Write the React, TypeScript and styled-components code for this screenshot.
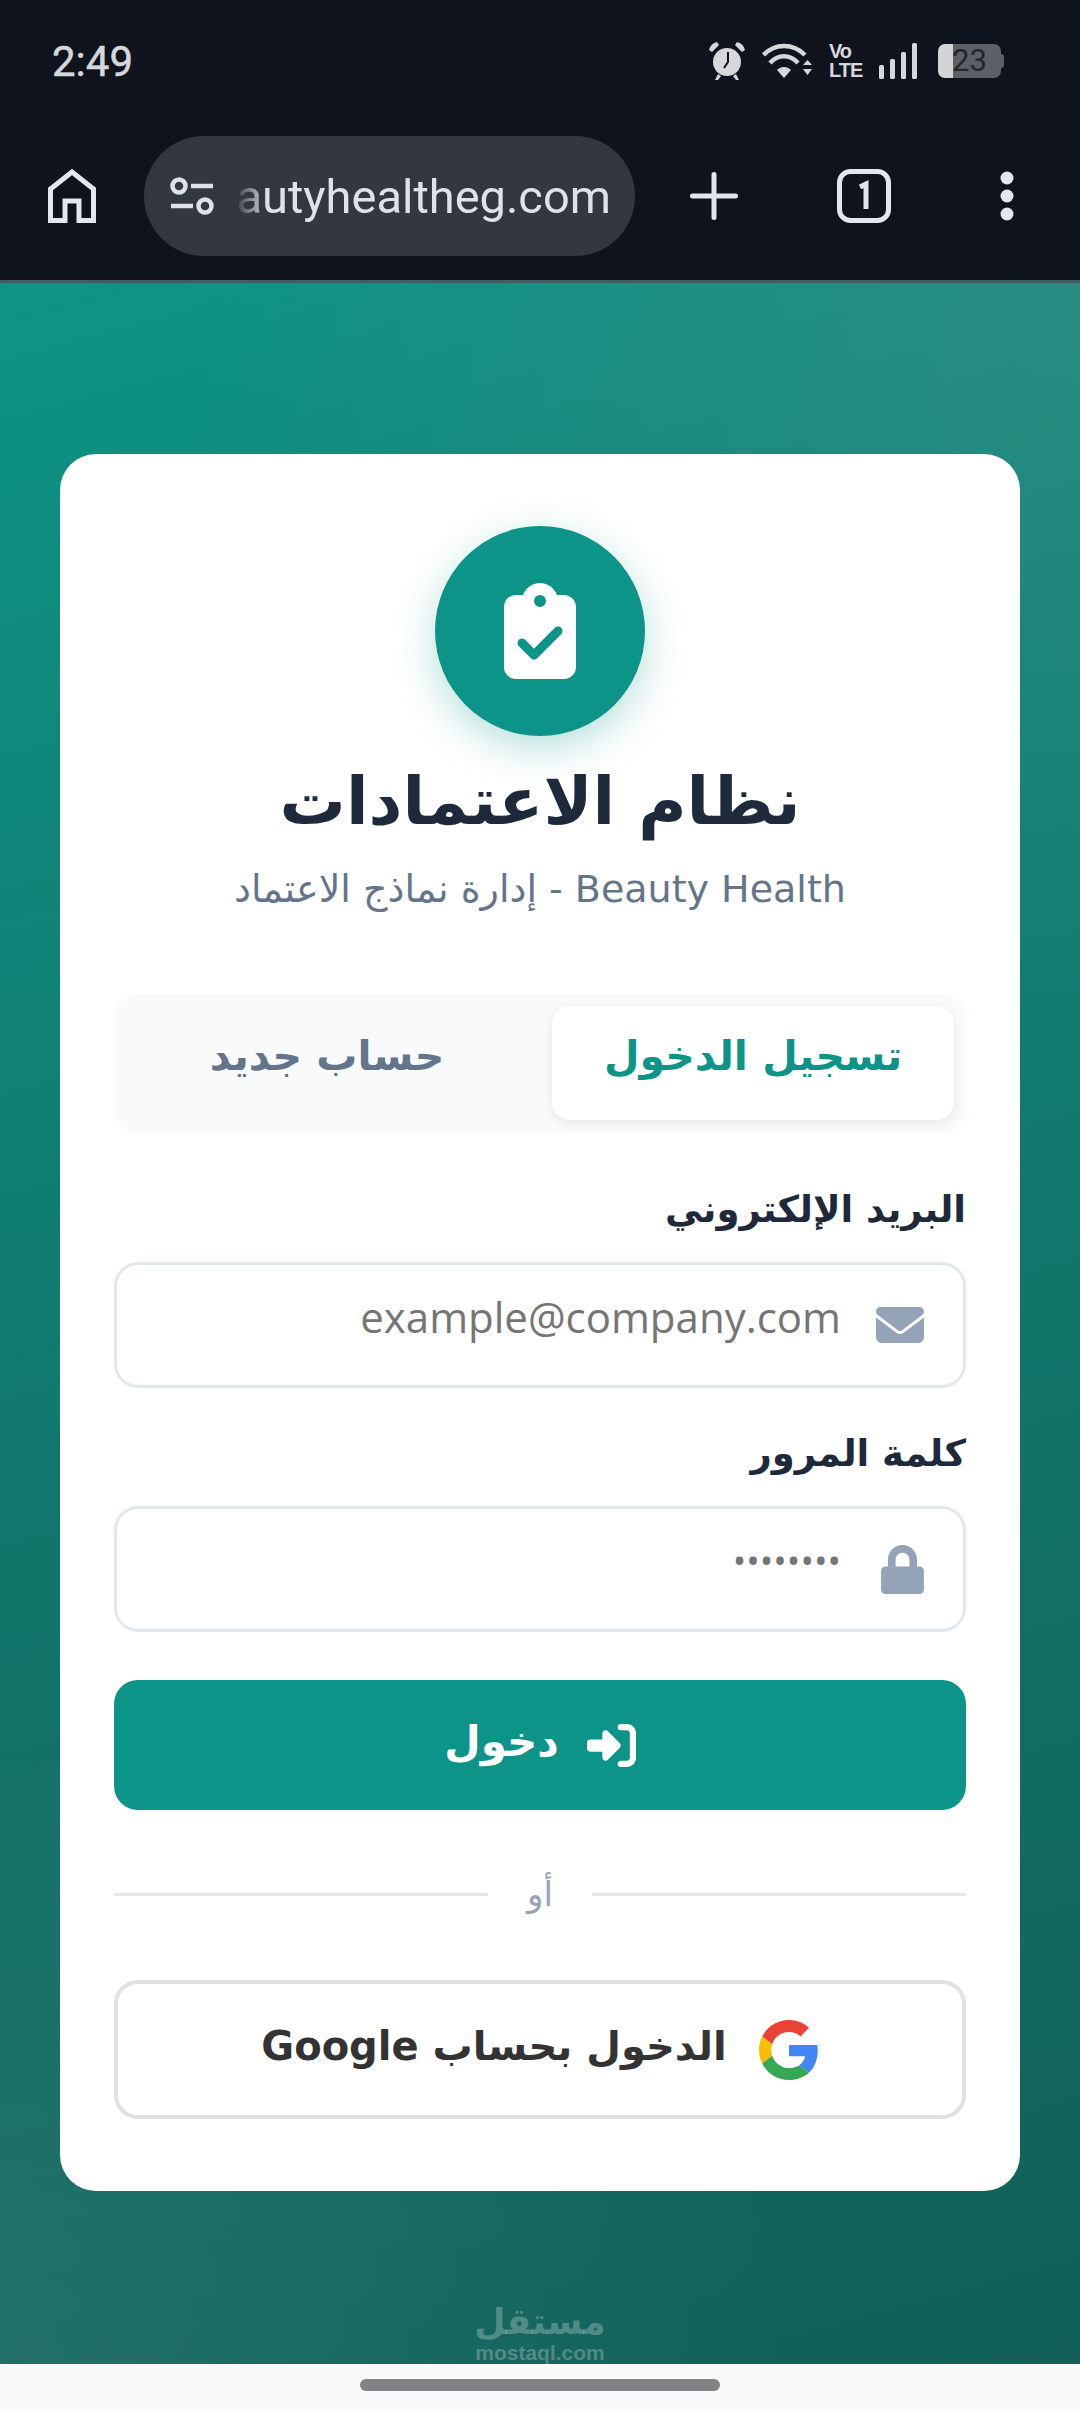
import styled, { createGlobalStyle } from 'styled-components';
import { FaLock } from 'react-icons/fa';
import { FaClipboardCheck, FaEnvelope, FaRightToBracket } from 'react-icons/fa6';

const arabicFont = `'DejaVu Sans', 'Noto Sans', sans-serif`;

const GlobalStyle = createGlobalStyle`
  html, body {
    margin: 0;
    padding: 0;
    background: #f8fafc;
  }
  * {
    box-sizing: border-box;
  }
`;

const Screen = styled.div`
  width: 1080px;
  height: 2412px;
  display: flex;
  flex-direction: column;
  overflow: hidden;
`;

const BrowserChrome = styled.header`
  height: 283px;
  flex-shrink: 0;
  background: #0f131e;
  border-bottom: 3px solid #3c5f63;
  display: flex;
  flex-direction: column;
`;

const StatusBar = styled.div`
  height: 136px;
  padding: 0 76px 14px 52px;
  display: flex;
  align-items: center;
  justify-content: space-between;
  color: #d6d7da;
`;

const Clock = styled.span`
  font: 400 42px 'Roboto', sans-serif;
  -webkit-text-stroke: 0.5px #d6d7da;
`;

const StatusIcons = styled.div`
  display: flex;
  align-items: center;
  gap: 16px;
`;

const VoLte = styled.div`
  width: 34px;
  display: flex;
  flex-direction: column;
  font: 700 20px/19px 'Liberation Sans', sans-serif;
  letter-spacing: -1px;
  color: #d6d7da;
`;

const Battery = styled.div`
  position: relative;
  width: 63px;
  height: 34px;
  margin-left: 4px;
  margin-right: 3px;
  border-radius: 7px;
  background: linear-gradient(90deg, #d3d4d6 0 24%, #5c5f66 24% 100%);
  color: #24262c;
  font: 400 31px/34px 'Roboto', sans-serif;
  text-align: center;

  &::after {
    content: '';
    position: absolute;
    right: -3px;
    top: 10px;
    width: 3px;
    height: 14px;
    border-radius: 0 3px 3px 0;
    background: #5c5f66;
  }
`;

const Toolbar = styled.div`
  height: 120px;
  padding: 0 0 0 48px;
  display: flex;
  align-items: center;
`;

const AddressPill = styled.div`
  width: 491px;
  height: 120px;
  margin-left: 48px;
  padding: 0 24px 0 26px;
  border-radius: 60px;
  background: #333742;
  display: flex;
  align-items: center;
  gap: 24px;
`;

const UrlText = styled.div`
  flex: 1;
  overflow: hidden;
  direction: ltr;
  display: flex;
  justify-content: flex-end;
  white-space: nowrap;
  color: #dfe2ea;
  font: 400 47px 'Roboto', sans-serif;
  mask-image: linear-gradient(90deg, rgba(0, 0, 0, 0.1), #000 30px);
`;

const ToolIcon = styled.svg<{ $gap: number }>`
  margin-left: ${(p) => p.$gap}px;
  flex-shrink: 0;
`;

const PageArea = styled.main`
  position: relative;
  flex: 1;
  padding: 171px 60px 0;
  background:
    radial-gradient(ellipse 900px 800px at 1080px 0, rgba(90, 140, 135, 0.35), transparent),
    radial-gradient(ellipse 800px 700px at 0 2081px, rgba(255, 255, 255, 0.07), transparent),
    linear-gradient(165deg, #0d9485 0%, #11776c 50%, #115f58 100%);
`;

const Card = styled.section`
  direction: rtl;
  height: 1737px;
  padding: 72px 54px 0;
  background: #fff;
  border-radius: 36px;
  display: flex;
  flex-direction: column;
`;

const LogoCircle = styled.div`
  width: 210px;
  height: 210px;
  flex-shrink: 0;
  align-self: center;
  border-radius: 50%;
  background: #0d9488;
  color: #fff;
  font-size: 96px;
  display: flex;
  align-items: center;
  justify-content: center;
  box-shadow: 0 12px 40px rgba(13, 148, 136, 0.3);
`;

const Title = styled.h1`
  margin: 24px 0 0;
  height: 84px;
  text-align: center;
  color: #1e293b;
  font: 700 66px/84px ${arabicFont};
`;

const Subtitle = styled.p`
  margin: 17px 0 0;
  height: 56px;
  text-align: center;
  color: #64748b;
  font: 400 38px/56px ${arabicFont};
`;

const Tabs = styled.div`
  margin-top: 77px;
  height: 139px;
  padding: 12px;
  border-radius: 24px;
  background: #f8fafc;
  display: grid;
  grid-template-columns: 402px 1fr;
`;

const Tab = styled.div<{ $active?: boolean }>`
  height: 114px;
  padding: 0 ${(p) => (p.$active ? 0 : 24)}px 14px 0;
  display: flex;
  align-items: center;
  justify-content: center;
  border-radius: 18px;
  background: ${(p) => (p.$active ? '#fff' : 'transparent')};
  color: ${(p) => (p.$active ? '#0d9488' : '#64748b')};
  box-shadow: ${(p) => (p.$active ? '0 3px 12px rgba(0, 0, 0, 0.08)' : 'none')};
  font: 700 41px ${arabicFont};
`;

const FieldLabel = styled.label<{ $top: number }>`
  display: block;
  margin-top: ${(p) => p.$top}px;
  height: 56px;
  color: #1e293b;
  font: 700 37px/56px ${arabicFont};
`;

const InputBox = styled.div`
  margin-top: 24px;
  height: 126px;
  padding: 0 39px;
  border: 3px solid #e2e8f0;
  border-radius: 24px;
  display: flex;
  align-items: center;
  gap: 35px;
  background: #fff;
  color: #94a3b8;
`;

const IconSlot = styled.span`
  width: 48px;
  display: flex;
  justify-content: flex-start;
  font-size: 48px;
`;

const LockGlyph = styled(FaLock)`
  flex-shrink: 0;
  margin-right: -3px;
  font-size: 49px;
`;

const FieldInput = styled.input<{ $small?: boolean }>`
  flex: 1;
  min-width: 0;
  height: 100%;
  padding: 0 0 18px;
  border: none;
  outline: none;
  background: transparent;
  direction: rtl;
  font: 400 ${(p) => (p.$small ? 36 : 42)}px 'Open Sans', sans-serif;

  &::placeholder {
    color: #757575;
    opacity: 1;
  }
`;

const SubmitButton = styled.button`
  margin-top: 48px;
  height: 130px;
  border: none;
  border-radius: 24px;
  background: #0d9488;
  color: #fff;
  display: flex;
  align-items: center;
  justify-content: center;
  gap: 28px;
  font: 700 42px ${arabicFont};

  svg {
    font-size: 49px;
  }
`;

const ButtonLabel = styled.span`
  margin-bottom: 8px;
`;

const Divider = styled.div`
  margin-top: 59px;
  height: 50px;
  display: flex;
  align-items: center;
  gap: 39px;
  color: #94a3b8;
  font: 400 34px ${arabicFont};

  &::before,
  &::after {
    content: '';
    flex: 1;
    height: 3px;
    background: #e2e8f0;
  }
`;

const GoogleButton = styled.button`
  margin-top: 61px;
  height: 139px;
  border: 4px solid #dfe1e4;
  border-radius: 24px;
  background: #fff;
  color: #333;
  display: flex;
  align-items: center;
  justify-content: center;
  gap: 32px;
  font: 700 40px ${arabicFont};
`;

const Watermark = styled.div`
  position: absolute;
  left: 474px;
  bottom: 0;
  width: 132px;
  display: flex;
  flex-direction: column;
  align-items: center;
  color: rgba(255, 255, 255, 0.25);
`;

const WatermarkArabic = styled.span`
  font: 700 36px/40px ${arabicFont};
`;

const WatermarkLatin = styled.span`
  font: 700 21px/22px 'Liberation Sans', sans-serif;
`;

const NavBar = styled.footer`
  height: 48px;
  flex-shrink: 0;
  background: #f8fafc;
  display: flex;
  justify-content: center;
  padding-top: 15px;
`;

const GestureHandle = styled.div`
  width: 360px;
  height: 12px;
  border-radius: 6px;
  background: #808184;
`;

const AlarmIcon = () => (
  <svg width="38" height="40" viewBox="0 0 38 40" fill="none">
    <path d="M1 9 Q3 2 9 1 L11 4 L4 11 Z M37 9 Q35 2 29 1 L27 4 L34 11 Z" fill="#d6d7da" />
    <circle cx="19" cy="21" r="14" fill="#d6d7da" />
    <path d="M20 11v10l-4 6" stroke="#0f131e" strokeWidth="2" />
    <path d="M10 33l-3 6h3l3-4zM28 33l3 6h-3l-3-4z" fill="#d6d7da" />
  </svg>
);

const WifiIcon = () => (
  <svg width="51" height="36" viewBox="0 0 51 36" fill="none" stroke="#d6d7da" strokeWidth="4.5">
    <path d="M1.5 12 C13 0 31 0 43 12" />
    <path d="M8 20 C16 11 28 11 36 20" />
    <path d="M15 27 L22 35 L29 27 C25 23 19 23 15 27 Z" fill="#d6d7da" stroke="none" />
    <path d="M41 22l4.500-5 4.500 5zM41 26l4.500 6 4.500-6z" fill="#d6d7da" stroke="none" />
  </svg>
);

const SignalIcon = () => (
  <svg width="39" height="36" viewBox="0 0 39 36" fill="#d6d7da">
    <rect x="0" y="22" width="5" height="14" rx="1.5" />
    <rect x="11" y="16" width="5" height="20" rx="1.5" />
    <rect x="22" y="9" width="5" height="27" rx="1.5" />
    <rect x="33" y="0" width="5" height="36" rx="1.5" />
  </svg>
);

const GoogleIcon = () => (
  <svg width="60" height="60" viewBox="0 0 48 48">
    <path fill="#EA4335" d="M24 9.5c3.54 0 6.71 1.22 9.21 3.6l6.85-6.85C35.9 2.38 30.47 0 24 0 14.62 0 6.51 5.38 2.56 13.22l7.98 6.19C12.43 13.72 17.74 9.5 24 9.5z" />
    <path fill="#4285F4" d="M46.98 24.55c0-1.57-.15-3.09-.38-4.55H24v9.02h12.94c-.58 2.96-2.26 5.48-4.78 7.18l7.73 6c4.51-4.18 7.09-10.36 7.09-17.65z" />
    <path fill="#FBBC05" d="M10.53 28.59c-.48-1.45-.76-2.99-.76-4.59s.27-3.14.76-4.59l-7.98-6.19C.92 16.46 0 20.12 0 24c0 3.88.92 7.54 2.56 10.78l7.97-6.19z" />
    <path fill="#34A853" d="M24 48c6.48 0 11.93-2.13 15.89-5.81l-7.73-6c-2.15 1.45-4.92 2.3-8.16 2.3-6.26 0-11.57-4.22-13.47-9.91l-7.98 6.19C6.51 42.62 14.62 48 24 48z" />
  </svg>
);

const App = () => {
  return (
    <Screen>
      <GlobalStyle />
      <BrowserChrome>
        <StatusBar>
          <Clock>2:49</Clock>
          <StatusIcons>
            <AlarmIcon />
            <WifiIcon />
            <VoLte>
              <span>Vo</span>
              <span>LTE</span>
            </VoLte>
            <SignalIcon />
            <Battery>23</Battery>
          </StatusIcons>
        </StatusBar>
        <Toolbar>
          <svg width="48" height="54" viewBox="0 0 48 54" fill="none" stroke="#e3e6f0" strokeWidth="5">
            <path d="M2.5 51.5V20L24 3l21.5 17v31.500H31V32H17v19.500z" />
          </svg>
          <AddressPill>
            <svg width="44" height="38" viewBox="0 0 44 38" fill="none" stroke="#dfe2ea" strokeWidth="4.5">
              <circle cx="9" cy="9" r="6.5" />
              <path d="M21 9h22M1 29h22" />
              <circle cx="35" cy="29" r="6.5" />
            </svg>
            <UrlText>autyhealtheg.com</UrlText>
          </AddressPill>
          <ToolIcon $gap={55} width="48" height="48" viewBox="0 0 48 48" stroke="#e3e6f0" strokeWidth="5" strokeLinecap="round">
            <path d="M24 2.500v43M2.500 24h43" />
          </ToolIcon>
          <ToolIcon $gap={99} width="54" height="54" viewBox="0 0 54 54" fill="none">
            <rect x="2.5" y="2.5" width="49" height="49" rx="11" stroke="#e3e6f0" strokeWidth="5" />
            <path d="M23 18l6-3v25" stroke="#e3e6f0" strokeWidth="5" />
          </ToolIcon>
          <ToolIcon $gap={109} width="14" height="50" viewBox="0 0 14 50" fill="#e3e6f0" stroke="none">
            <circle cx="7" cy="7" r="6.5" />
            <circle cx="7" cy="25" r="6.5" />
            <circle cx="7" cy="43" r="6.5" />
          </ToolIcon>
        </Toolbar>
      </BrowserChrome>

      <PageArea>
        <Card>
          <LogoCircle>
            <FaClipboardCheck />
          </LogoCircle>
          <Title>نظام الاعتمادات</Title>
          <Subtitle>Beauty Health - إدارة نماذج الاعتماد</Subtitle>

          <Tabs>
            <Tab $active>تسجيل الدخول</Tab>
            <Tab>حساب جديد</Tab>
          </Tabs>

          <FieldLabel $top={49}>البريد الإلكتروني</FieldLabel>
          <InputBox>
            <IconSlot>
              <FaEnvelope />
            </IconSlot>
            <FieldInput type="email" placeholder="example@company.com" />
          </InputBox>

          <FieldLabel $top={38}>كلمة المرور</FieldLabel>
          <InputBox>
            <IconSlot>
              <LockGlyph />
            </IconSlot>
            <FieldInput type="text" $small placeholder="••••••••" />
          </InputBox>

          <SubmitButton>
            <FaRightToBracket />
            <ButtonLabel>دخول</ButtonLabel>
          </SubmitButton>

          <Divider>أو</Divider>

          <GoogleButton>
            <GoogleIcon />
            <ButtonLabel>الدخول بحساب Google</ButtonLabel>
          </GoogleButton>
        </Card>
        <Watermark>
          <WatermarkArabic>مستقل</WatermarkArabic>
          <WatermarkLatin>mostaql.com</WatermarkLatin>
        </Watermark>
      </PageArea>

      <NavBar>
        <GestureHandle />
      </NavBar>
    </Screen>
  );
};

export default App;
